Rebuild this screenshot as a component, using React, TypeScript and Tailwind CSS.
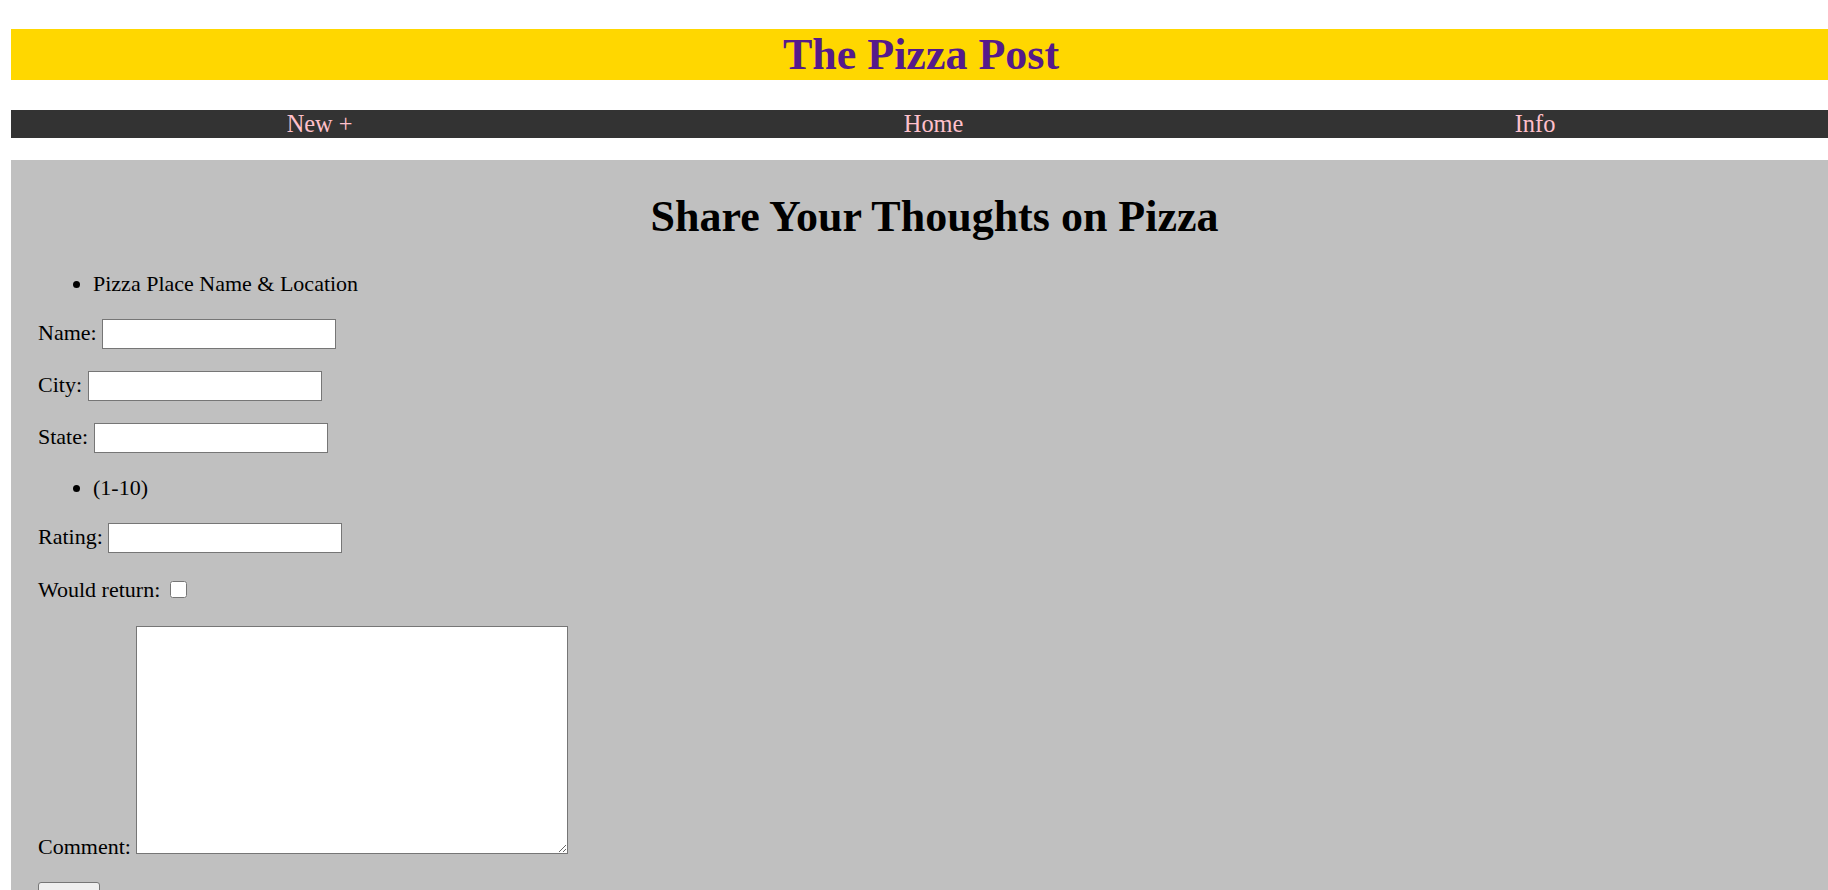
import React from "react";

const inputCls =
    "h-[30px] w-[234px] border border-[#767676] bg-white px-[3px] align-baseline text-[18px] font-['Liberation_Sans',Arial,sans-serif]";

const Field = ({ label }: { label: string }) => (
    <p className="mb-[22px]">
        <label>{label} </label>
        <input type="text" className={inputCls} />
    </p>
);

const App = () => {
    return (
        <div className="h-[890px] w-full overflow-hidden bg-white pl-[11px] pt-[29px] font-['Liberation_Serif','Times_New_Roman',serif] text-[22px] leading-[normal] text-black">
            <h1 className="w-[1820px] bg-[#ffd700] text-center text-[44px] font-bold leading-[51px] text-[#551a8b]">
                The Pizza Post
            </h1>

            <nav className="mt-[30px] flex h-[28px] w-[1820px] items-center justify-around bg-[#333333] text-[24.4px] leading-[28px] text-[#ffc0cb]">
                <a href="#">New +</a>
                <a href="#">Home</a>
                <a href="#">Info</a>
            </nav>

            <div className="mt-[22px] w-[1820px] bg-[#c0c0c0] pl-[27px] pt-[31px] pb-10">
                <h1 className="mb-[29px] text-center text-[44px] font-bold leading-[51px]">
                    Share Your Thoughts on Pizza
                </h1>

                <form>
                    <ul className="mb-[22px] list-disc pl-[55px]">
                        <li>Pizza Place Name &amp; Location</li>
                    </ul>
                    <Field label="Name:" />
                    <Field label="City:" />
                    <Field label="State:" />

                    <ul className="mb-[22px] list-disc pl-[55px]">
                        <li>(1-10)</li>
                    </ul>
                    <Field label="Rating:" />

                    <p className="mb-[22px] flex h-[29px] items-center">
                        <label className="whitespace-pre">Would return: </label>
                        <input type="checkbox" className="ml-[4px] h-[17px] w-[17px]" />
                    </p>

                    <p className="mb-[22px]">
                        <label>Comment: </label>
                        <textarea className="h-[228px] w-[432px] border border-[#767676] bg-white align-baseline" />
                    </p>

                    <p>
                        <button
                            type="button"
                            className="h-[29px] w-[62px] rounded-[3px] border border-[#767676] bg-[#efefef] pt-[8px] text-[18px] leading-none font-['Liberation_Sans',Arial,sans-serif]"
                        >
                            Submit
                        </button>
                    </p>
                </form>
            </div>
        </div>
    );
};

export default App;
